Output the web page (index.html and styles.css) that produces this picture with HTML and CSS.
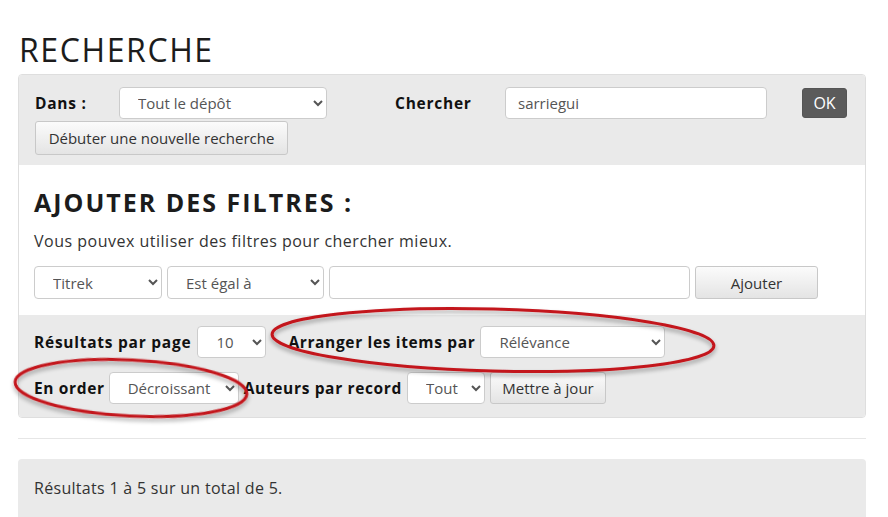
FILE: index.html
```html
<!DOCTYPE html>
<html lang="fr">
<head>
  <meta charset="UTF-8" />
  <title>Recherche</title>
  <link rel="stylesheet" href="styles.css">
</head>
<body>
  <div class="page">
    <h1 class="title">RECHERCHE</h1>

    <div class="search-panel">
      <div class="scope">
        <div class="scope-row">
          <label class="lbl lbl-dans">Dans :</label>
          <select class="field sel-scope"><option>Tout le dépôt</option></select>
          <label class="lbl lbl-query">Chercher</label>
          <input class="field inp-query" type="text" value="sarriegui" />
          <button class="btn-ok">OK</button>
        </div>
        <button class="btn btn-new">Débuter une nouvelle recherche</button>
      </div>

      <div class="filters">
        <h2 class="filters-title">AJOUTER DES FILTRES :</h2>
        <p class="filters-help">Vous pouvex utiliser des filtres pour chercher mieux.</p>
        <div class="filter-row">
          <select class="field sel-field"><option>Titrek</option></select>
          <select class="field sel-op"><option>Est égal à</option></select>
          <input class="field inp-value" type="text" />
          <button class="btn btn-add">Ajouter</button>
        </div>
      </div>

      <div class="controls">
        <div class="ctrl-row">
          <label class="lbl">Résultats par page</label>
          <select class="field sel-rpp"><option>10</option></select>
          <label class="lbl lbl-sort">Arranger les items par</label>
          <select class="field sel-sort"><option>Rélévance</option></select>
        </div>
        <div class="ctrl-row ctrl-row-2">
          <label class="lbl">En order</label>
          <select class="field sel-order"><option>Décroissant</option></select>
          <label class="lbl">Auteurs par record</label>
          <select class="field sel-auth"><option>Tout</option></select>
          <button class="btn btn-update">Mettre à jour</button>
        </div>
      </div>
    </div>

    <hr class="sep" />

    <div class="results">Résultats 1 à 5 sur un total de 5.</div>

    <!-- hand-drawn marks over the options -->
    <svg class="marks" width="888" height="517" viewBox="0 0 888 517">
      <defs>
        <filter id="shadow" x="-10%" y="-20%" width="120%" height="160%">
          <feDropShadow dx="0" dy="3" stdDeviation="2" flood-color="#000" flood-opacity="0.35" />
        </filter>
      </defs>
      <g filter="url(#shadow)" fill="none" stroke="#c3161c" stroke-width="3">
        <ellipse cx="493" cy="340" rx="221" ry="31" transform="rotate(1.5 493 340)" />
        <ellipse cx="131" cy="388" rx="116" ry="28" transform="rotate(3 131 388)" />
      </g>
    </svg>
  </div>
</body>
</html>
```

FILE: styles.css
```css
body {
  margin: 0;
  font-family: 'Open Sans', sans-serif;
  color: #222;
  background: #fff;
}
.page {
  position: relative;
  width: 848px;
  padding: 0 0 0 18px;
  overflow: hidden;
  height: 517px;
}
.title {
  margin: 0;
  padding: 30px 0 0 1px;
  height: 44px;
  font-size: 32px;
  font-weight: 400;
  letter-spacing: 1.6px;
  line-height: 40px;
  color: #1c1c1c;
}
.search-panel {
  border: 1px solid #dedede;
  border-radius: 4px;
  overflow: hidden;
}
.scope {
  background: #eaeaea;
  padding: 12px 16px 10px 16px;
}
.scope-row {
  display: flex;
  align-items: center;
  height: 32px;
  margin-bottom: 2px;
}
.lbl {
  font-weight: 700;
  font-size: 15.5px;
  letter-spacing: 0.75px;
  color: #111;
  white-space: nowrap;
}
.lbl-dans {
  width: 84px;
}
.lbl-query {
  width: 110px;
  margin-left: 68px;
}
.field {
  font-family: 'Open Sans', sans-serif;
  font-size: 15px;
  color: #555;
  background: #fff;
  border: 1px solid #ccc;
  border-radius: 4px;
  padding: 0 10px 0 14px;
  box-sizing: border-box;
  height: 32px;
}
.sel-scope {
  width: 208px;
}
.inp-query {
  width: 262px;
  padding-left: 12px;
}
.btn-ok {
  margin-left: 35px;
  width: 45px;
  height: 30px;
  background: #5b5b5b;
  color: #fff;
  border: 1px solid #555;
  border-radius: 3px;
  font-family: 'Open Sans', sans-serif;
  font-size: 16px;
}
.btn {
  font-family: 'Open Sans', sans-serif;
  font-size: 15px;
  color: #333;
  background: linear-gradient(#fbfbfb, #e4e4e4);
  border: 1px solid #c8c8c8;
  border-radius: 3px;
  box-sizing: border-box;
  height: 33px;
  padding: 0 12px;
  white-space: nowrap;
}
.btn-new {
  width: 253px;
  height: 34px;
}
.filters {
  background: #fff;
  padding: 20px 16px 16px 15px;
}
.filters-title {
  margin: 0;
  font-size: 25px;
  font-weight: 700;
  letter-spacing: 2px;
  line-height: 34px;
  color: #1c1c1c;
}
.filters-help {
  margin: 11px 0 0 0;
  font-size: 16px;
  letter-spacing: 0.5px;
  line-height: 22px;
  color: #333;
}
.filter-row {
  display: flex;
  gap: 5px;
  margin-top: 14px;
  height: 33px;
}
.filter-row .field {
  height: 33px;
}
.sel-field {
  width: 128px;
}
.sel-op {
  width: 157px;
}
.inp-value {
  width: 361px;
}
.btn-add {
  width: 123px;
}
.controls {
  background: #eaeaea;
  padding: 11px 16px 13px 15px;
}
.ctrl-row {
  display: flex;
  align-items: center;
  gap: 5px;
  height: 32px;
}
.ctrl-row-2 {
  margin-top: 13px;
  height: 33px;
}
.ctrl-row-2 .lbl {
  letter-spacing: 0.65px;
}
.sel-rpp {
  width: 69px;
  margin-left: 1px;
}
.lbl-sort {
  margin-left: 17px;
  letter-spacing: 0.65px;
}
.sel-sort {
  width: 185px;
}
.sel-order {
  width: 130px;
  margin-left: -1px;
}
.sel-auth {
  width: 78px;
}
.btn-update {
  width: 116px;
  height: 32px;
  padding: 0 8px;
}
.sep {
  margin: 20px 0 20px 0;
  border: 0;
  border-top: 1px solid #e6e6e6;
}
.results {
  background: #eaeaea;
  border-radius: 4px;
  padding: 18px 16px;
  font-size: 16px;
  letter-spacing: 0.3px;
  color: #333;
  height: 60px;
}
.marks {
  position: absolute;
  left: 0;
  top: 0;
  pointer-events: none;
}
```
